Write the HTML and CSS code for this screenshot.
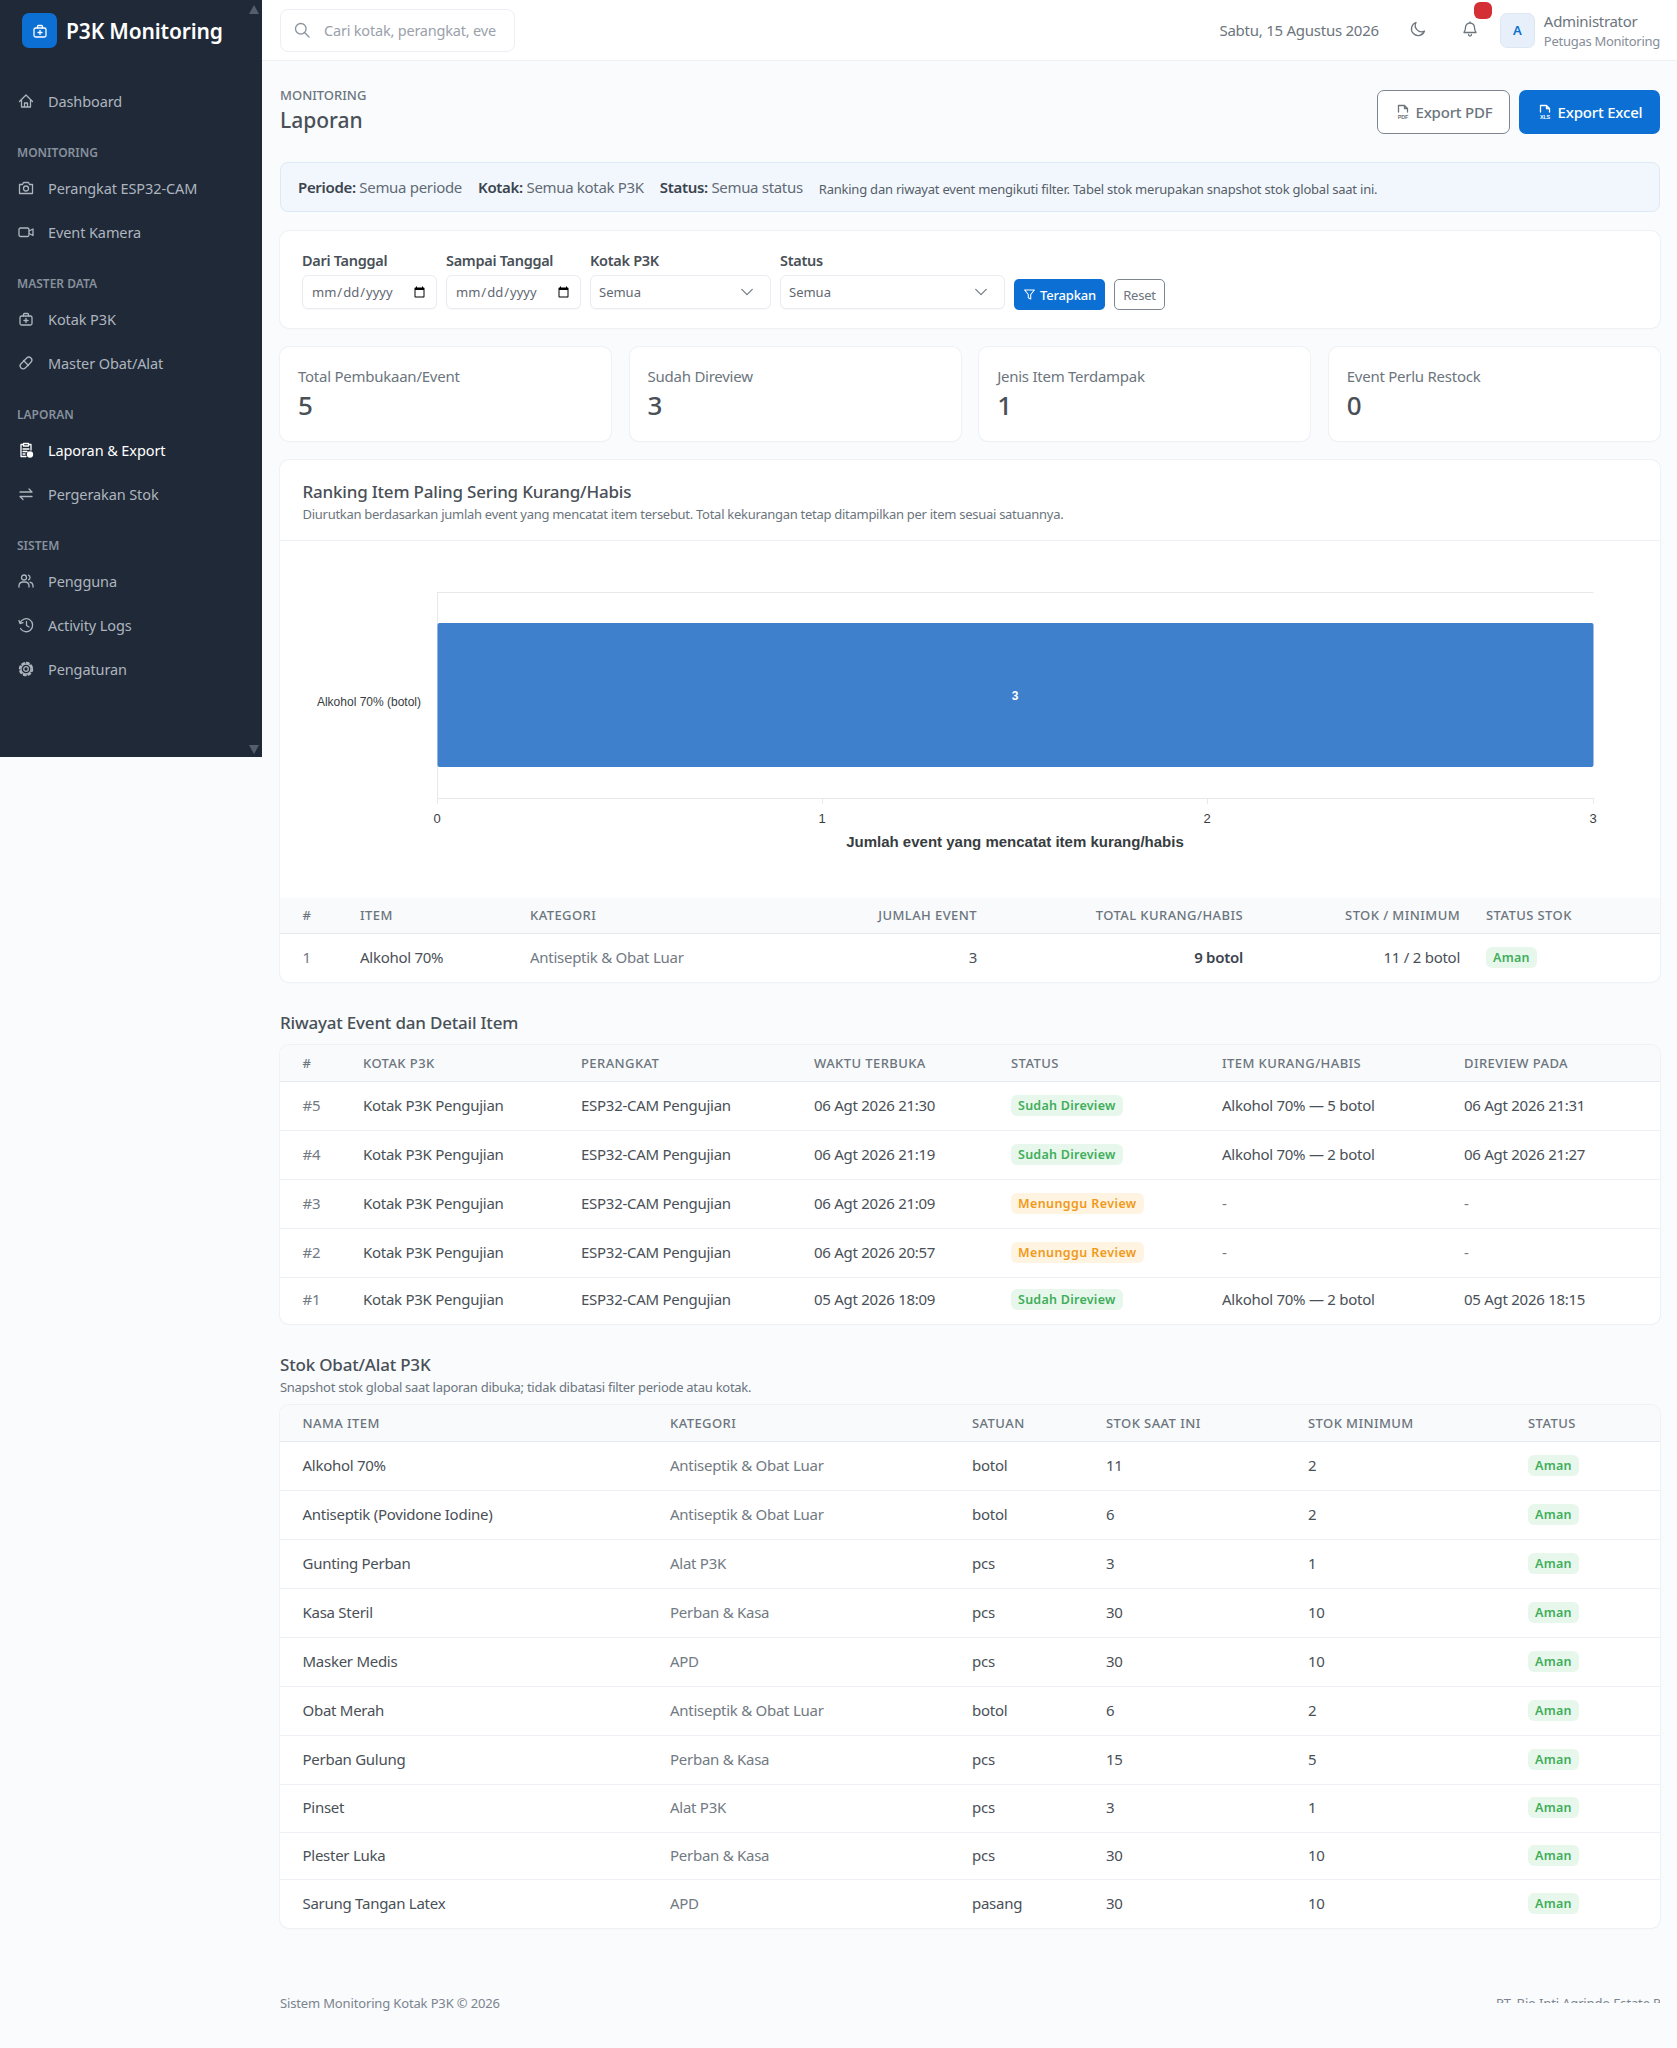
FILE: index.html
```html
<!DOCTYPE html>
<html lang="id">
<head>
    <meta charset="UTF-8">
    <meta name="viewport" content="width=device-width, initial-scale=1.0">
    <title>Laporan - P3K Monitoring</title>
    <link rel="stylesheet" href="styles.css">
</head>
<body>
<div class="layout">
    <aside class="sidebar">
        <span class="scroll-arrow scroll-up"></span>
        <div class="brand">
            <span class="brand-logo">
                <svg viewBox="0 0 16 16" class="icon"><rect x="2" y="5" width="12" height="9" rx="1.5"/><path d="M5.5 5V3.5a1 1 0 0 1 1-1h3a1 1 0 0 1 1 1V5M8 7.5v4M6 9.5h4"/></svg>
            </span>
            <span class="brand-name">P3K Monitoring</span>
        </div>
        <nav class="menu">
            <a class="menu-item">
                <svg viewBox="0 0 16 16" class="icon"><path d="M1.5 8.5 8 2l6.5 6.5M3.5 7v7h9V7M6.5 14v-4h3v4"/></svg>Dashboard
            </a>
            <div class="menu-label">MONITORING</div>
            <a class="menu-item">
                <svg viewBox="0 0 16 16" class="icon"><path d="M1.5 4.5h3l1-2h5l1 2h3v9h-13z"/><circle cx="8" cy="8.5" r="2.5"/></svg>Perangkat ESP32-CAM
            </a>
            <a class="menu-item">
                <svg viewBox="0 0 16 16" class="icon"><rect x="1" y="4" width="10" height="8.5" rx="1.5"/><path d="m11 7 4-2v6.5l-4-2"/></svg>Event Kamera
            </a>
            <div class="menu-label">MASTER DATA</div>
            <a class="menu-item">
                <svg viewBox="0 0 16 16" class="icon"><rect x="2" y="5" width="12" height="9" rx="1.5"/><path d="M5.5 5V3.5a1 1 0 0 1 1-1h3a1 1 0 0 1 1 1V5M8 7.5v4M6 9.5h4"/></svg>Kotak P3K
            </a>
            <a class="menu-item">
                <svg viewBox="0 0 16 16" class="icon"><rect x="1" y="5" width="14" height="6" rx="3" transform="rotate(-45 8 8)"/><path d="m5.5 5.5 5 5"/></svg>Master Obat/Alat
            </a>
            <div class="menu-label">LAPORAN</div>
            <a class="menu-item active">
                <svg viewBox="0 0 16 16" class="icon"><path d="M5 2.500H3v12h5M11 2.500h2V8M5.500 1.500h5v2.500h-5zM5 7h6M5 9.500h4M5 12h2"/><circle cx="12" cy="12.500" r="2.500" fill="currentColor"/></svg>Laporan &amp; Export
            </a>
            <a class="menu-item">
                <svg viewBox="0 0 16 16" class="icon"><path d="M2 6h12l-3-3M14 10.500H2l3 3"/></svg>Pergerakan Stok
            </a>
            <div class="menu-label">SISTEM</div>
            <a class="menu-item">
                <svg viewBox="0 0 16 16" class="icon"><circle cx="6" cy="4.500" r="2.500"/><path d="M1 14v-1.500a4 4 0 0 1 4-3.500h2a4 4 0 0 1 4 3.500V14M10.500 2.200a2.500 2.500 0 0 1 0 4.600M12 9.200a3.800 3.800 0 0 1 3 3.300V14"/></svg>Pengguna
            </a>
            <a class="menu-item">
                <svg viewBox="0 0 16 16" class="icon"><path d="M2.500 11.500A6.500 6.500 0 1 0 2 6M1 3.500 2 6.500l3-.8M8.500 4.500V8.500l2.500 1.500"/></svg>Activity Logs
            </a>
            <a class="menu-item">
                <svg viewBox="0 0 16 16" class="icon"><circle cx="8" cy="8" r="2.300"/><circle cx="8" cy="8" r="5"/><circle cx="8" cy="8" r="6.200" stroke-width="2" stroke-dasharray="2.200 2.670"/></svg>Pengaturan
            </a>
        </nav>
        <span class="scroll-arrow scroll-down"></span>
    </aside>

    <div class="main">
        <header class="topbar">
            <div class="search">
                <svg viewBox="0 0 16 16" class="icon"><circle cx="6.800" cy="6.800" r="5.300"/><path d="m10.800 10.800 4.200 4.200"/></svg>
                <input type="text" placeholder="Cari kotak, perangkat, event...">
            </div>
            <div class="topbar-right">
                <span class="today">Sabtu, 15 Agustus 2026</span>
                <svg viewBox="0 0 16 16" class="icon top-icon moon"><path d="M6 1.500a6.700 6.700 0 1 0 8.500 8.500A6.300 6.300 0 0 1 6 1.500z"/></svg>
                <span class="bell">
                    <svg viewBox="0 0 16 16" class="icon top-icon"><path d="M8 2a4.500 4.500 0 0 0-4.500 4.500c0 3-1.500 5-1.500 5h12s-1.500-2-1.500-5A4.500 4.500 0 0 0 8 2zM6.500 13.500a1.500 1.500 0 0 0 3 0M8 1v1"/></svg>
                    <span class="bell-badge"></span>
                </span>
                <span class="avatar">A</span>
                <div class="user">
                    <div class="user-name">Administrator</div>
                    <div class="user-role">Petugas Monitoring</div>
                </div>
            </div>
        </header>

        <main class="content">
            <div class="page-head">
                <div class="page-title">
                    <div class="eyebrow">MONITORING</div>
                    <h1>Laporan</h1>
                </div>
                <div class="head-actions">
                    <a class="btn btn-outline">
                        <svg viewBox="0 0 16 16" class="icon file-icon"><path d="M3.500 8V1.500h6l3 3V8M9.500 1.500v3h3"/><text x="8" y="14.500">PDF</text></svg>Export PDF
                    </a>
                    <a class="btn btn-primary">
                        <svg viewBox="0 0 16 16" class="icon file-icon"><path d="M3.500 8V1.500h6l3 3V8M9.500 1.500v3h3"/><text x="8" y="14.500">XLS</text></svg>Export Excel
                    </a>
                </div>
            </div>

            <div class="filter-note">
                <span class="note-pair"><b>Periode:</b> Semua periode</span>
                <span class="note-pair"><b>Kotak:</b> Semua kotak P3K</span>
                <span class="note-pair"><b>Status:</b> Semua status</span>
                <span class="note-text">Ranking dan riwayat event mengikuti filter. Tabel stok merupakan snapshot stok global saat ini.</span>
            </div>

            <form class="card filter-form">
                <label class="field f-date"><span>Dari Tanggal</span><input type="date"></label>
                <label class="field f-date"><span>Sampai Tanggal</span><input type="date"></label>
                <label class="field f-box"><span>Kotak P3K</span><select><option>Semua</option></select></label>
                <label class="field f-status"><span>Status</span><select><option>Semua</option></select></label>
                <a class="btn-sm btn-primary">
                    <svg viewBox="0 0 16 16" class="icon"><path d="M2 2.500h12L9.500 8v5.500l-3-1.500V8z"/></svg>Terapkan
                </a>
                <a class="btn-sm btn-outline">Reset</a>
            </form>

            <div class="stats">
                <div class="card stat"><div class="stat-label">Total Pembukaan/Event</div><div class="stat-value">5</div></div>
                <div class="card stat"><div class="stat-label">Sudah Direview</div><div class="stat-value">3</div></div>
                <div class="card stat"><div class="stat-label">Jenis Item Terdampak</div><div class="stat-value">1</div></div>
                <div class="card stat"><div class="stat-label">Event Perlu Restock</div><div class="stat-value">0</div></div>
            </div>

            <section class="card ranking">
                <div class="ranking-head">
                    <h2>Ranking Item Paling Sering Kurang/Habis</h2>
                    <p>Diurutkan berdasarkan jumlah event yang mencatat item tersebut. Total kekurangan tetap ditampilkan per item sesuai satuannya.</p>
                </div>
                <svg class="chart" viewBox="0 0 1380 357" width="1380" height="357">
                    <path class="grid" d="M157.500 51.500H1313.500M157.500 51V257M157.500 257.500H1313.500M157.500 257v6M542.500 257v6M927.500 257v6M1313.500 257v6"/>
                    <rect class="bar" x="157.500" y="82" width="1156" height="144" rx="2"/>
                    <text class="bar-value" x="735" y="159">3</text>
                    <text class="cat" x="141" y="165">Alkohol 70% (botol)</text>
                    <text class="tick" x="157" y="282">0</text>
                    <text class="tick" x="542" y="282">1</text>
                    <text class="tick" x="927" y="282">2</text>
                    <text class="tick" x="1313" y="282">3</text>
                    <text class="axis-title" x="735" y="306">Jumlah event yang mencatat item kurang/habis</text>
                </svg>
                <table class="table">
                    <colgroup><col style="width:67px"><col style="width:170px"><col style="width:283px"><col style="width:190px"><col style="width:266px"><col style="width:217px"><col style="width:187px"></colgroup>
                    <thead>
                        <tr><th>#</th><th>Item</th><th>Kategori</th><th class="right">Jumlah Event</th><th class="right">Total Kurang/Habis</th><th class="right">Stok / Minimum</th><th>Status Stok</th></tr>
                    </thead>
                    <tbody>
                        <tr><td class="muted">1</td><td>Alkohol 70%</td><td class="muted">Antiseptik &amp; Obat Luar</td><td class="right">3</td><td class="right strong">9 botol</td><td class="right">11 / 2 botol</td><td><span class="badge ok">Aman</span></td></tr>
                    </tbody>
                </table>
            </section>

            <h2 class="section-title">Riwayat Event dan Detail Item</h2>
            <div class="card table-card">
                <table class="table">
                    <colgroup><col style="width:70px"><col style="width:218px"><col style="width:233px"><col style="width:197px"><col style="width:211px"><col style="width:242px"><col style="width:209px"></colgroup>
                    <thead>
                        <tr><th>#</th><th>Kotak P3K</th><th>Perangkat</th><th>Waktu Terbuka</th><th>Status</th><th>Item Kurang/Habis</th><th>Direview Pada</th></tr>
                    </thead>
                    <tbody>
                        <tr><td class="muted">#5</td><td>Kotak P3K Pengujian</td><td>ESP32-CAM Pengujian</td><td>06 Agt 2026 21:30</td><td><span class="badge ok">Sudah Direview</span></td><td>Alkohol 70% — 5 botol</td><td>06 Agt 2026 21:31</td></tr>
                        <tr><td class="muted">#4</td><td>Kotak P3K Pengujian</td><td>ESP32-CAM Pengujian</td><td>06 Agt 2026 21:19</td><td><span class="badge ok">Sudah Direview</span></td><td>Alkohol 70% — 2 botol</td><td>06 Agt 2026 21:27</td></tr>
                        <tr><td class="muted">#3</td><td>Kotak P3K Pengujian</td><td>ESP32-CAM Pengujian</td><td>06 Agt 2026 21:09</td><td><span class="badge wait">Menunggu Review</span></td><td class="muted">-</td><td class="muted">-</td></tr>
                        <tr><td class="muted">#2</td><td>Kotak P3K Pengujian</td><td>ESP32-CAM Pengujian</td><td>06 Agt 2026 20:57</td><td><span class="badge wait">Menunggu Review</span></td><td class="muted">-</td><td class="muted">-</td></tr>
                        <tr class="short"><td class="muted">#1</td><td>Kotak P3K Pengujian</td><td>ESP32-CAM Pengujian</td><td>05 Agt 2026 18:09</td><td><span class="badge ok">Sudah Direview</span></td><td>Alkohol 70% — 2 botol</td><td>05 Agt 2026 18:15</td></tr>
                    </tbody>
                </table>
            </div>

            <h2 class="section-title stock-title">Stok Obat/Alat P3K</h2>
            <p class="section-sub">Snapshot stok global saat laporan dibuka; tidak dibatasi filter periode atau kotak.</p>
            <div class="card table-card">
                <table class="table">
                    <colgroup><col style="width:377px"><col style="width:302px"><col style="width:134px"><col style="width:202px"><col style="width:220px"><col style="width:145px"></colgroup>
                    <thead>
                        <tr><th>Nama Item</th><th>Kategori</th><th>Satuan</th><th>Stok Saat Ini</th><th>Stok Minimum</th><th>Status</th></tr>
                    </thead>
                    <tbody>
                        <tr><td>Alkohol 70%</td><td class="muted">Antiseptik &amp; Obat Luar</td><td>botol</td><td>11</td><td>2</td><td><span class="badge ok">Aman</span></td></tr>
                        <tr><td>Antiseptik (Povidone Iodine)</td><td class="muted">Antiseptik &amp; Obat Luar</td><td>botol</td><td>6</td><td>2</td><td><span class="badge ok">Aman</span></td></tr>
                        <tr><td>Gunting Perban</td><td class="muted">Alat P3K</td><td>pcs</td><td>3</td><td>1</td><td><span class="badge ok">Aman</span></td></tr>
                        <tr><td>Kasa Steril</td><td class="muted">Perban &amp; Kasa</td><td>pcs</td><td>30</td><td>10</td><td><span class="badge ok">Aman</span></td></tr>
                        <tr><td>Masker Medis</td><td class="muted">APD</td><td>pcs</td><td>30</td><td>10</td><td><span class="badge ok">Aman</span></td></tr>
                        <tr><td>Obat Merah</td><td class="muted">Antiseptik &amp; Obat Luar</td><td>botol</td><td>6</td><td>2</td><td><span class="badge ok">Aman</span></td></tr>
                        <tr><td>Perban Gulung</td><td class="muted">Perban &amp; Kasa</td><td>pcs</td><td>15</td><td>5</td><td><span class="badge ok">Aman</span></td></tr>
                        <tr class="mid"><td>Pinset</td><td class="muted">Alat P3K</td><td>pcs</td><td>3</td><td>1</td><td><span class="badge ok">Aman</span></td></tr>
                        <tr class="short"><td>Plester Luka</td><td class="muted">Perban &amp; Kasa</td><td>pcs</td><td>30</td><td>10</td><td><span class="badge ok">Aman</span></td></tr>
                        <tr><td>Sarung Tangan Latex</td><td class="muted">APD</td><td>pasang</td><td>30</td><td>10</td><td><span class="badge ok">Aman</span></td></tr>
                    </tbody>
                </table>
            </div>

            <footer class="footer">
                <span>Sistem Monitoring Kotak P3K © 2026</span>
                <span class="footer-clip"><span>PT. Bio Inti Agrindo Estate Pulau</span></span>
            </footer>
        </main>
    </div>
</div>
</body>
</html>
```

FILE: styles.css
```css
* {
    box-sizing: border-box;
}
body {
    margin: 0;
    min-height: 2048px;
    background-color: #f9fbfd;
    color: #495057;
    font-family: "Noto Sans", Arial, sans-serif;
    font-size: 15px;
}
.icon {
    width: 16px;
    height: 16px;
    flex: none;
    fill: none;
    stroke: currentColor;
    stroke-width: 1.3;
    stroke-linecap: round;
    stroke-linejoin: round;
}
.layout {
    display: flex;
    align-items: flex-start;
}

/* sidebar */
.sidebar {
    position: relative;
    width: 262px;
    height: 757px;
    flex: none;
    background-color: #1f2937;
    color: #aeb5bf;
}
.scroll-arrow {
    position: absolute;
    right: 3px;
    width: 0;
    height: 0;
    border-left: 5.5px solid transparent;
    border-right: 5.5px solid transparent;
}
.scroll-up {
    top: 5px;
    border-bottom: 9px solid #565e6b;
}
.scroll-down {
    bottom: 3px;
    border-top: 9px solid #565e6b;
}
.brand {
    display: flex;
    align-items: center;
    gap: 9px;
    height: 48px;
    padding: 13px 0 0 22px;
}
.brand-logo {
    display: flex;
    align-items: center;
    justify-content: center;
    width: 35px;
    height: 35px;
    border-radius: 7px;
    background-color: #0b6fd4;
    color: #fff;
}
.brand-name {
    color: #fff;
    font-size: 21px;
    font-weight: 600;
    letter-spacing: -0.15px;
}
.menu {
    padding-top: 31px;
}
.menu-item {
    display: flex;
    align-items: center;
    gap: 14px;
    height: 44px;
    padding-left: 18px;
    font-size: 14.5px;
    letter-spacing: -0.1px;
}
.menu-item.active {
    color: #fff;
}
.menu-label {
    display: flex;
    align-items: center;
    height: 43px;
    padding: 15px 0 0 17px;
    color: #87909c;
    font-size: 12px;
    font-weight: 600;
}

/* topbar */
.main {
    flex: 1;
    min-width: 0;
}
.topbar {
    display: flex;
    align-items: center;
    justify-content: space-between;
    height: 61px;
    padding: 0 17px 0 18px;
    background-color: #fff;
    border-bottom: 1px solid #edf0f4;
}
.search {
    display: flex;
    align-items: center;
    gap: 14px;
    width: 235px;
    height: 43px;
    padding: 0 18px 0 13px;
    border: 1px solid #eceff3;
    border-radius: 8px;
    color: #8a929c;
}
.search input {
    width: 100%;
    min-width: 0;
    border: 0;
    outline: 0;
    padding: 0;
    font: inherit;
    font-size: 14.5px;
    letter-spacing: -0.2px;
}
.search input::placeholder {
    color: #9aa1ab;
}
.topbar-right {
    display: flex;
    align-items: center;
}
.today {
    margin-right: 31px;
    color: #6c757d;
    font-size: 15px;
    letter-spacing: -0.25px;
}
.top-icon {
    display: block;
    color: #6c757d;
}
.moon {
    margin-right: 36px;
    margin-top: -2px;
}
.bell {
    position: relative;
    margin-right: 22px;
    margin-top: -2px;
}
.bell-badge {
    position: absolute;
    top: -19px;
    left: 12px;
    width: 18px;
    height: 17px;
    border-radius: 6px;
    background-color: #d32f35;
}
.avatar {
    display: flex;
    align-items: center;
    justify-content: center;
    width: 35px;
    height: 35px;
    margin-right: 9px;
    border: 1px solid #dde7f2;
    border-radius: 7px;
    background-color: #e7f0fa;
    color: #0b6fd4;
    font-size: 13px;
    font-weight: 600;
}
.user {
    margin-top: 2px;
    line-height: 20px;
}
.user-name {
    color: #6c757d;
    font-size: 15px;
    letter-spacing: -0.3px;
}
.user-role {
    color: #868e98;
    font-size: 13px;
    letter-spacing: -0.28px;
}

/* page */
.content {
    padding: 29px 17px 0 18px;
}
.page-head {
    display: flex;
    align-items: center;
    justify-content: space-between;
    height: 44px;
}
.page-title {
    margin-top: 2px;
}
.eyebrow {
    color: #6c757d;
    font-size: 13px;
    font-weight: 500;
    line-height: 16px;
    margin-top: -4px;
}
h1 {
    margin: 2px 0 0;
    font-size: 21px;
    font-weight: 500;
    line-height: 30px;
}
.head-actions {
    display: flex;
    gap: 9px;
}
.btn {
    display: flex;
    align-items: center;
    justify-content: center;
    gap: 5px;
    height: 44px;
    border-radius: 7px;
    font-size: 15px;
    font-weight: 500;
    letter-spacing: -0.2px;
}
.btn.btn-outline {
    width: 133px;
}
.btn.btn-primary {
    width: 141px;
}
.btn-outline {
    border: 1px solid #7d858e;
    background-color: #fff;
    color: #6c757d;
}
.btn-primary {
    background-color: #0b6fd4;
    color: #fff;
}
.file-icon text {
    fill: currentColor;
    stroke: none;
    font-family: "Liberation Sans", Arial, sans-serif;
    font-size: 5.5px;
    font-weight: 700;
    text-anchor: middle;
}
.filter-note {
    display: flex;
    align-items: center;
    height: 50px;
    margin-top: 28px;
    padding: 0 17px;
    border: 1px solid #dde9f6;
    border-radius: 8px;
    background-color: #f2f7fd;
    font-size: 15px;
    letter-spacing: -0.32px;
}
.note-pair {
    margin-right: 16px;
    color: #626b75;
}
.note-pair b {
    color: #3b444f;
    font-weight: 600;
}
.note-text {
    margin-top: 3px;
    color: #565e68;
    font-size: 13px;
    letter-spacing: -0.22px;
}
.card {
    border-radius: 9px;
    background-color: #fff;
    box-shadow: 0 0 0 1px #eef1f5, 0 1px 2px rgba(0, 0, 0, 0.04);
}

/* filter */
.filter-form {
    display: flex;
    align-items: flex-end;
    gap: 9px;
    height: 97px;
    margin-top: 19px;
    padding: 0 22px 19px;
}
.field {
    display: flex;
    flex-direction: column;
    gap: 4px;
    font-size: 14.5px;
    font-weight: 600;
    letter-spacing: -0.3px;
}
.field span {
    line-height: 22px;
}
.field input,
.field select {
    height: 34px;
    padding: 0 8px;
    border: 1px solid #e9ecf0;
    border-radius: 6px;
    background-color: #fff;
    color: #5f6872;
    font-family: inherit;
    font-size: 13px;
    font-weight: 400;
    box-shadow: 0 1px 1px rgba(0, 0, 0, 0.03);
}
.field select {
    appearance: none;
    background-image: url("data:image/svg+xml,%3Csvg xmlns='http://www.w3.org/2000/svg' viewBox='0 0 16 16'%3E%3Cpath fill='none' stroke='%23767e88' stroke-width='1.5' stroke-linecap='round' stroke-linejoin='round' d='m2 5 6 6 6-6'/%3E%3C/svg%3E");
    background-repeat: no-repeat;
    background-position: right 16px center;
    background-size: 14px;
}
.f-date {
    width: 135px;
}
.f-box {
    width: 181px;
}
.f-status {
    width: 225px;
}
.btn-sm {
    display: flex;
    align-items: center;
    justify-content: center;
    height: 31px;
    margin-bottom: -1px;
    border-radius: 5px;
    font-size: 13px;
    letter-spacing: -0.2px;
}
.btn-sm .icon {
    width: 13px;
    height: 13px;
    margin-right: 4px;
}
.btn-sm.btn-primary {
    width: 91px;
    font-weight: 500;
}
.btn-sm.btn-outline {
    width: 51px;
}

/* stat cards */
.stats {
    display: grid;
    grid-template-columns: repeat(4, 1fr);
    gap: 18.3px;
    margin-top: 19px;
}
.stat {
    height: 94px;
    padding: 18px 18px 0;
}
.stat-label {
    color: #6c757d;
    font-size: 15px;
    line-height: 22px;
    letter-spacing: -0.25px;
}
.stat-value {
    font-size: 26px;
    font-weight: 500;
    line-height: 36px;
}

/* ranking */
.ranking {
    margin-top: 19px;
    overflow: hidden;
}
.ranking-head {
    height: 81px;
    padding: 20px 22.5px 0;
    border-bottom: 1px solid #edf0f4;
}
.ranking-head h2,
.section-title {
    margin: 0;
    font-size: 17px;
    font-weight: 500;
    line-height: 24px;
    letter-spacing: -0.2px;
}
.ranking-head p,
.section-sub {
    margin: 0;
    color: #6c757d;
    font-size: 13px;
    line-height: 20px;
    letter-spacing: -0.28px;
}
.chart {
    display: block;
}
.chart .grid {
    fill: none;
    stroke: #e6e8eb;
}
.chart .bar {
    fill: #3f80cd;
}
.chart text {
    font-family: "Liberation Sans", Arial, sans-serif;
    font-size: 12px;
    fill: #373d3f;
}
.chart .bar-value {
    fill: #fff;
    font-weight: 700;
    text-anchor: middle;
}
.chart .cat {
    text-anchor: end;
}
.chart .tick {
    font-size: 13px;
    text-anchor: middle;
}
.chart .axis-title {
    font-size: 15px;
    font-weight: 700;
    text-anchor: middle;
}

/* tables */
.table {
    width: 100%;
    border-collapse: collapse;
    table-layout: fixed;
}
.table th {
    height: 36px;
    padding: 0 13px;
    border-bottom: 1px solid #e6e9ed;
    background-color: #f8fafc;
    color: #6c757d;
    font-size: 13px;
    font-weight: 500;
    letter-spacing: 0.42px;
    text-align: left;
    text-transform: uppercase;
}
.table td {
    height: 49px;
    padding: 0 13px 2px;
    border-bottom: 1px solid #edf0f4;
    font-size: 15px;
    letter-spacing: -0.27px;
    white-space: nowrap;
}
.table tbody tr:last-child td {
    border-bottom: 0;
}
.table tr.short td {
    height: 47px;
}
.table tr.mid td {
    height: 48px;
}
.table-card .table tr.short:last-child td {
    padding-bottom: 4px;
}
.table th:first-child,
.table td:first-child {
    padding-left: 22.5px;
}
.table .right {
    text-align: right;
}
.table .muted {
    color: #727a83;
}
.table .strong {
    color: #3b444f;
    font-weight: 600;
}
.ranking .table th {
    height: 35px;
}
.badge {
    display: inline-block;
    height: 21px;
    padding: 0 7px;
    border-radius: 6px;
    font-size: 12.5px;
    font-weight: 600;
    line-height: 21px;
    letter-spacing: 0.26px;
    vertical-align: middle;
}
.badge.ok {
    background-color: #e8f7ec;
    color: #3fae5a;
}
.badge.wait {
    background-color: #fff4e2;
    color: #f09a1a;
    letter-spacing: 0.4px;
}
.section-title {
    margin-top: 29px;
}
.table-card {
    margin-top: 10px;
    overflow: hidden;
}
.stock-title {
    margin-top: 29px;
}
.section-sub + .table-card {
    margin-top: 8px;
}

/* footer */
.footer {
    display: flex;
    justify-content: space-between;
    align-items: flex-start;
    height: 36px;
    margin-top: 66px;
    color: #7c848e;
    font-size: 13px;
    letter-spacing: -0.15px;
}
.footer-clip {
    display: block;
    width: 164px;
    height: 9px;
    overflow: hidden;
    white-space: nowrap;
}
```
